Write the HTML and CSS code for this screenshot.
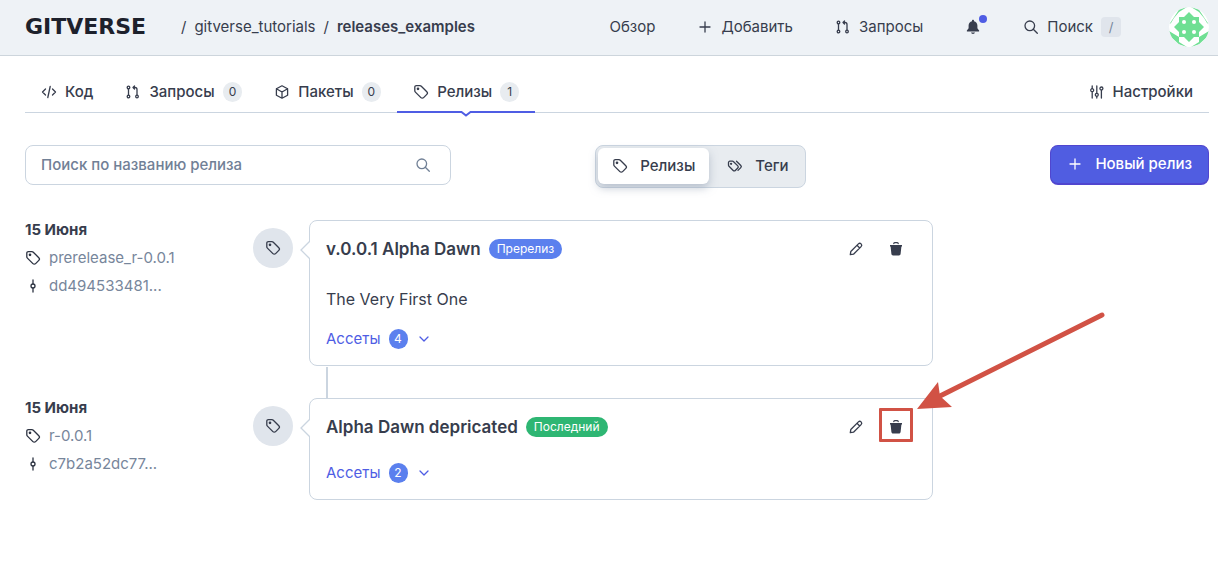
FILE: index.html
```html
<!DOCTYPE html>
<html lang="ru">
<head>
<meta charset="utf-8">
<meta name="viewport" content="width=device-width, initial-scale=1">
<title>releases_examples</title>
<link rel="stylesheet" href="styles.css">
</head>
<body>
<svg class="sprite" aria-hidden="true">
  <symbol id="plus" viewBox="0 0 16 16"><path d="M8 3v10M3 8h10"/></symbol>
  <symbol id="pull" viewBox="0 0 16 16"><circle cx="3.500" cy="3.500" r="1.300"/><circle cx="3.500" cy="12.500" r="1.300"/><circle cx="12" cy="12.500" r="1.300"/><path d="M3.500 5v6M12 11V5.500a2 2 0 0 0-2-2H8M9.500 2 8 3.500 9.500 5"/></symbol>
  <symbol id="search" viewBox="0 0 16 16"><circle cx="6.800" cy="6.800" r="4.800"/><path d="m10.300 10.300 4 4"/></symbol>
  <symbol id="tag" viewBox="0 0 16 16"><path d="M1.800 3.200v3.500c0 .5.200 1 .6 1.400l5.500 5.500c.8.800 1.900.8 2.700 0l3.200-3.200c.8-.8.8-1.900 0-2.700L8.300 2.200c-.4-.4-.9-.6-1.400-.6H3.400c-.9 0-1.600.7-1.600 1.600z"/><circle cx="5" cy="4.800" r=".7" fill="currentColor"/></symbol>
  <symbol id="tags" viewBox="0 0 16 16"><path d="M1.500 4.500v2.700c0 .4.200.8.500 1.100l4.200 4.200c.6.600 1.500.6 2.100 0l2.500-2.500c.6-.6.600-1.500 0-2.100L6.600 3.700c-.3-.3-.7-.5-1.100-.5H2.800c-.7 0-1.300.6-1.300 1.300z"/><path d="m9.500 3.200 4.300 4.300c.6.600.6 1.500 0 2.100l-2.800 2.800"/><circle cx="4.100" cy="5.800" r=".5" fill="currentColor"/></symbol>
  <symbol id="code" viewBox="0 0 16 16"><path d="M4.500 5 1.500 8l3 3M11.500 5l3 3-3 3M9.200 2.500 6.800 13.500"/></symbol>
  <symbol id="box" viewBox="0 0 16 16"><path d="m8 1.800 5.600 3v6.400L8 14.200l-5.600-3V4.800zM2.400 4.800 8 8l5.600-3.200M8 8v6.200"/></symbol>
  <symbol id="sliders" viewBox="0 0 16 16"><path d="M3.200 2v2.500M3.200 7.800V14M7.800 2v7M7.800 12.300V14M12.400 6.300V14"/><circle cx="3.200" cy="6.200" r="1.500"/><circle cx="7.800" cy="10.800" r="1.500"/><circle cx="12.400" cy="4.500" r="1.500"/></symbol>
  <symbol id="commit" viewBox="0 0 16 16"><circle cx="8" cy="8" r="2"/><path d="M8 2v4M8 10v4"/></symbol>
  <symbol id="pencil" viewBox="0 0 16 16"><path d="m2.300 13.700.5-3.200 7.600-7.600a1.900 1.900 0 0 1 2.700 2.700l-7.600 7.600zM9 4.300 11.700 7"/></symbol>
  <symbol id="trash" viewBox="0 0 16 16"><path fill="currentColor" stroke="none" d="M2 4h12v1.600h-.6l-.8 7.300c-.1.900-.8 1.500-1.600 1.500H5c-.8 0-1.500-.6-1.600-1.500l-.8-7.300H2z"/><path d="M5.800 2.500c0-.6.500-.9 1-.9h2.400c.5 0 1 .3 1 .9"/></symbol>
  <symbol id="chevron" viewBox="0 0 16 16"><path d="m4 6 4 4 4-4"/></symbol>
  <symbol id="bell" viewBox="0 0 16 16"><path fill="currentColor" stroke="none" d="M8 .8c.6 0 1 .4 1 1v.4c2 .5 3.400 2.200 3.400 4.300v2.700l1.700 2.200c.3.500 0 1.100-.6 1.100h-11c-.6 0-.9-.6-.6-1.100l1.700-2.200V6.500C3.600 4.400 5 2.700 7 2.200v-.4c0-.6.400-1 1-1zM6 13.500h4c-.2.800-1 1.400-2 1.400s-1.800-.6-2-1.400z"/></symbol>
</svg>

<header class="header">
  <nav class="crumbs" aria-label="Путь">
    <a class="logo" href="#">GITVERSE</a>
    <span>/</span>
    <a href="#">gitverse_tutorials</a>
    <span>/</span>
    <a class="crumb-current" href="#">releases_examples</a>
  </nav>
  <nav class="menu" aria-label="Меню">
    <a class="item" href="#">Обзор</a>
    <button class="item" type="button"><svg class="icon"><use href="#plus"/></svg>Добавить</button>
    <a class="item" href="#"><svg class="icon"><use href="#pull"/></svg>Запросы</a>
    <button class="item bell" type="button" aria-label="Уведомления"><svg class="icon"><use href="#bell"/></svg></button>
    <button class="item" type="button"><svg class="icon"><use href="#search"/></svg>Поиск <kbd>/</kbd></button>
    <a class="avatar" href="#" aria-label="Профиль">
      <svg viewBox="0 0 40 40"><circle cx="20" cy="20" r="20" fill="#fff"/><g fill="#6fdf93"><path d="m20 5 5 5h5v5l5 5-5 5v5h-5l-5 5-5-5h-5v-5l-5-5 5-5v-5h5z"/><path d="M10 2.700 18 0l-8 5-5 6-3 5-1.500 1zM30 2.700 22 0l8 5 5 6 3 5 1.500 1zM10 37.300 18 40l-8-5v-5l-10-6 2 6zM30 37.300 22 40l8-5v-5l10-6-2 6z"/></g><g fill="#fff"><circle cx="15" cy="15" r="2"/><circle cx="25" cy="15" r="2"/><circle cx="15" cy="25" r="2"/><circle cx="25" cy="25" r="2"/></g></svg>
    </a>
  </nav>
</header>

<main class="page">
  <nav class="tabs" aria-label="Разделы">
    <a class="tab" href="#"><svg class="icon"><use href="#code"/></svg>Код</a>
    <a class="tab" href="#"><svg class="icon"><use href="#pull"/></svg>Запросы <span class="count">0</span></a>
    <a class="tab" href="#"><svg class="icon"><use href="#box"/></svg>Пакеты <span class="count">0</span></a>
    <a class="tab tab-active" href="#" aria-current="page"><svg class="icon"><use href="#tag"/></svg>Релизы <span class="count">1</span><svg class="tab-notch" viewBox="0 0 12 6"><path class="notch-gap" d="M1 0h10L6 5z"/><path d="M0 1h1.500L6 4.500 10.500 1H12"/></svg></a>
    <a class="tab tab-settings" href="#"><svg class="icon"><use href="#sliders"/></svg>Настройки</a>
  </nav>

  <div class="toolbar">
    <label class="search">
      <input type="search" placeholder="Поиск по названию релиза" aria-label="Поиск по названию релиза">
      <svg class="icon"><use href="#search"/></svg>
    </label>
    <div class="switch">
      <button class="option option-active" type="button"><svg class="icon"><use href="#tag"/></svg>Релизы</button>
      <button class="option" type="button"><svg class="icon"><use href="#tags"/></svg>Теги</button>
    </div>
    <button class="new" type="button"><svg class="icon"><use href="#plus"/></svg>Новый релиз</button>
  </div>

  <section class="releases">
    <article class="release">
      <div class="meta">
        <strong>15 Июня</strong>
        <a href="#"><svg class="icon"><use href="#tag"/></svg>prerelease_r-0.0.1</a>
        <a href="#"><svg class="icon"><use href="#commit"/></svg>dd494533481...</a>
      </div>
      <div class="marker"><svg class="icon"><use href="#tag"/></svg></div>
      <div class="card">
        <svg class="pointer" viewBox="0 0 10 20"><path d="M10 1 1 10l9 9"/></svg>
        <div class="card-head">
          <h2>v.0.0.1 Alpha Dawn</h2><span class="label">Пререлиз</span>
          <div class="actions">
            <button type="button" aria-label="Изменить"><svg class="icon"><use href="#pencil"/></svg></button>
            <button type="button" aria-label="Удалить"><svg class="icon"><use href="#trash"/></svg></button>
          </div>
        </div>
        <p class="text">The Very First One</p>
        <button class="assets" type="button">Ассеты <span class="assets-count">4</span><svg class="icon"><use href="#chevron"/></svg></button>
      </div>
    </article>
    <article class="release">
      <div class="meta">
        <strong>15 Июня</strong>
        <a href="#"><svg class="icon"><use href="#tag"/></svg>r-0.0.1</a>
        <a href="#"><svg class="icon"><use href="#commit"/></svg>c7b2a52dc77...</a>
      </div>
      <div class="marker"><svg class="icon"><use href="#tag"/></svg></div>
      <div class="card">
        <svg class="pointer" viewBox="0 0 10 20"><path d="M10 1 1 10l9 9"/></svg>
        <div class="card-head">
          <h2>Alpha Dawn depricated</h2><span class="label label-latest">Последний</span>
          <div class="actions">
            <button type="button" aria-label="Изменить"><svg class="icon"><use href="#pencil"/></svg></button>
            <button class="highlighted" type="button" aria-label="Удалить"><svg class="icon"><use href="#trash"/></svg><svg class="arrow" viewBox="0 0 190 100"><path class="arrow-line" d="M187 5 25 86"/><path class="arrow-head" d="m2 99 21-27 2 14 12 11z"/></svg></button>
          </div>
        </div>
        <button class="assets" type="button">Ассеты <span class="assets-count">2</span><svg class="icon"><use href="#chevron"/></svg></button>
      </div>
    </article>
  </section>
</main>
</body>
</html>
```
FILE: styles.css
```css
*, *::before, *::after { box-sizing: border-box; }
body {
  margin: 0;
  background: #fff;
  color: #373d4d;
  font: 400 15px/20px Inter, "Noto Sans", sans-serif;
}
a { color: inherit; text-decoration: none; }
button {
  padding: 0;
  border: 0;
  background: none;
  color: inherit;
  font: inherit;
  cursor: pointer;
}
.sprite { display: none; }
.icon {
  flex: none;
  width: 16px;
  height: 16px;
  fill: none;
  stroke: currentColor;
  stroke-width: 1.3;
  stroke-linecap: round;
  stroke-linejoin: round;
}

.header {
  display: flex;
  align-items: center;
  justify-content: space-between;
  height: 56px;
  padding: 0 9px 2px 25px;
  border-bottom: 1px solid #cdd5dc;
  background: #eef2f6;
}
.crumbs { display: flex; gap: 8px; }
.logo {
  width: 148px;
  color: #1d212c;
  font: 700 22px/20px "DejaVu Sans", sans-serif;
}
.crumb-current { font-weight: 600; }
.menu { display: flex; align-items: center; gap: 42px; }
.item { display: flex; align-items: center; gap: 8px; }
.bell { position: relative; }
.bell::after {
  content: "";
  position: absolute;
  top: -4px;
  right: -6px;
  width: 8px;
  height: 8px;
  border-radius: 50%;
  background: #4f5de4;
}
kbd {
  width: 20px;
  border-radius: 4px;
  background: #e0e5ec;
  color: #77869b;
  font: 400 13px/20px Inter, sans-serif;
  text-align: center;
}
.avatar { width: 40px; height: 40px; margin-left: 6px; }
.avatar svg { display: block; border-radius: 50%; }

.page { padding: 15px 9px 24px 25px; }
.tabs {
  display: flex;
  height: 42px;
  border-bottom: 1px solid #cbd5e0;
  font-weight: 500;
}
.tab {
  position: relative;
  display: flex;
  align-items: center;
  gap: 8px;
  padding: 0 16px;
}
.tab-settings { margin-left: auto; }
.tab-active::after {
  content: "";
  position: absolute;
  inset: auto 0 -1px;
  height: 2px;
  background: #4f5de4;
}
.tab-notch {
  position: absolute;
  z-index: 1;
  bottom: -5px;
  left: calc(50% - 6px);
  width: 12px;
  height: 6px;
  fill: none;
  stroke: #4f5de4;
  stroke-width: 2;
}
.tab-notch .notch-gap { fill: #fff; stroke: none; }
.count {
  min-width: 19px;
  padding: 0 6px;
  border-radius: 10px;
  background: #e8ecf0;
  font-size: 12px;
  font-weight: 400;
  text-align: center;
}

.toolbar { display: flex; align-items: flex-start; margin-top: 32px; font-weight: 500; }
.search {
  display: flex;
  align-items: center;
  flex: 0 1 36%;
  height: 40px;
  padding: 0 19px 0 15px;
  border: 1px solid #cbd5e0;
  border-radius: 8px;
  color: #718096;
}
.search input {
  flex: 1;
  min-width: 0;
  padding: 0;
  border: 0;
  outline: 0;
  background: none;
  color: #373d4d;
  font: inherit;
}
.search input::placeholder { color: #718096; }
.switch {
  display: flex;
  gap: 4px;
  margin-left: 144px;
  padding: 2px 2px 3px;
  border: 1px solid #cbd5e0;
  border-radius: 8px;
  background: #e8ecf0;
}
.option {
  display: flex;
  align-items: center;
  gap: 12px;
  height: 36px;
  padding: 0 14px;
  border-radius: 6px;
}
.option-active { background: #fff; box-shadow: 0 4px 8px #8796ab80; }
.new {
  display: flex;
  align-items: center;
  gap: 12px;
  height: 40px;
  margin-left: auto;
  padding: 0 16px 2px;
  border: 1px solid #5046cf;
  border-bottom-width: 2px;
  border-radius: 8px;
  background: #505de1;
  color: #fff;
}

.releases { display: grid; gap: 32px; margin-top: 32px; }
.release {
  display: grid;
  grid-template-columns: 228px 56px minmax(0, 624px);
}
.meta {
  display: flex;
  flex-direction: column;
  gap: 8px;
}
.meta strong { font-weight: 700; }
.meta a { display: flex; align-items: center; gap: 8px; color: #77869b; }
.meta .icon { color: #2d3342; }
.marker {
  display: grid;
  place-items: center;
  width: 40px;
  height: 40px;
  margin-top: 8px;
  border-radius: 50%;
  background: #e0e5ec;
}
.card {
  position: relative;
  display: flex;
  flex-direction: column;
  align-items: flex-start;
  gap: 24px;
  padding: 16px;
  border: 1px solid #cbd5e0;
  border-radius: 8px;
}
.release + .release .card::before {
  content: "";
  position: absolute;
  left: 16px;
  top: -32px;
  width: 2px;
  height: 31px;
  background: #cbd5e0;
}
.pointer {
  position: absolute;
  left: -10px;
  top: 19px;
  width: 10px;
  height: 20px;
  fill: #fff;
  stroke: #cbd5e0;
  stroke-width: 1.3;
}
.card-head { display: flex; align-items: center; align-self: stretch; gap: 8px; }
h2 { margin: 0; font-size: 17px; font-weight: 600; line-height: 24px; }
.label {
  padding: 0 8px;
  border-radius: 10px;
  background: #5b80ee;
  color: #fff;
  font-size: 12px;
}
.label-latest { background: #2eb673; }
.actions { display: flex; margin-left: auto; }
.actions button {
  position: relative;
  display: grid;
  place-items: center;
  width: 40px;
  height: 24px;
}
.highlighted::before {
  content: "";
  position: absolute;
  top: -7px;
  left: 3px;
  width: 34px;
  height: 34px;
  border: 3px solid #d15245;
  border-radius: 1px;
}
.actions .arrow {
  position: absolute;
  left: 39px;
  top: -105px;
  width: 190px;
  height: 100px;
}
.arrow-line { fill: none; stroke: #d15245; stroke-width: 5; stroke-linecap: round; }
.arrow-head { fill: #d15245; stroke: none; }
.text { margin: 2px 0 -6px; font-size: 16px; line-height: 24px; }
.assets { display: flex; align-items: center; gap: 8px; color: #4f5de4; }
.assets-count {
  min-width: 19px;
  padding: 0 4px;
  border-radius: 10px;
  background: #5b80ee;
  color: #fff;
  font-size: 12px;
}
```
